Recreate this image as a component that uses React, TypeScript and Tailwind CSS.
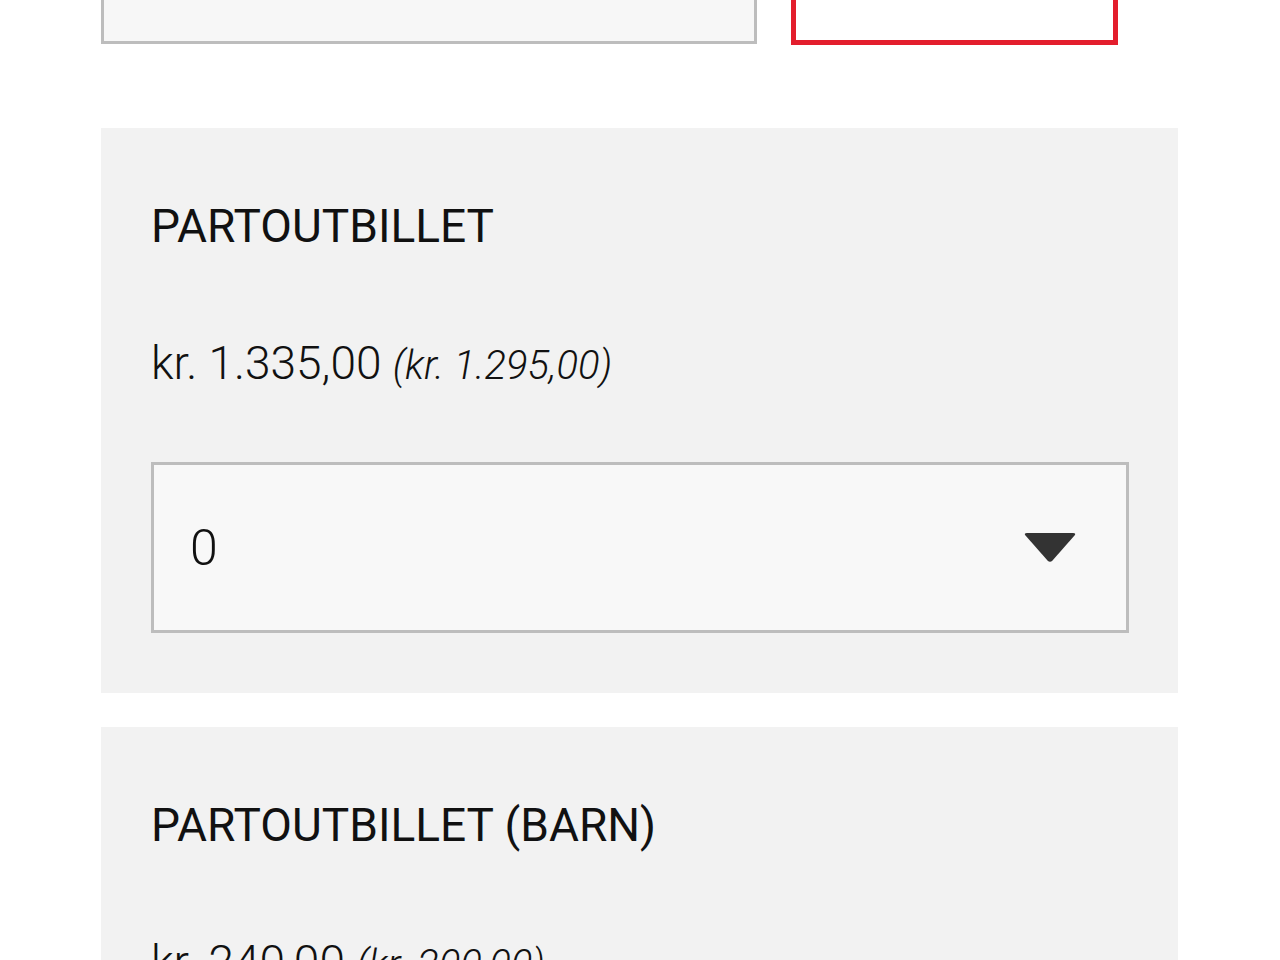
import React from "react";

type Ticket = {
  name: string;
  price: string;
  listPrice: string;
};

const tickets: Ticket[] = [
  { name: "PARTOUTBILLET", price: "kr. 1.335,00", listPrice: "(kr. 1.295,00)" },
  { name: "PARTOUTBILLET (BARN)", price: "kr. 240,00", listPrice: "(kr. 200,00)" },
];

function Caret() {
  return (
    <svg width="54" height="31" viewBox="0 0 54 31" className="shrink-0">
      <path
        d="M4 1 H50 Q53.5 1 51.5 3.5 L29.5 28.5 Q27 31 24.5 28.5 L2.5 3.5 Q0.5 1 4 1 Z"
        fill="#333333"
      />
    </svg>
  );
}

function TicketCard({ ticket }: { ticket: Ticket }) {
  return (
    <section className="bg-[#f2f2f2] pt-[75px] pb-[60px] pl-[50px] pr-[49px]">
      <h2 className="text-[46px] leading-none font-normal text-[#111]">{ticket.name}</h2>

      <p className="mt-[91px] text-[46px] leading-none font-light text-[#111]">
        {ticket.price}{" "}
        <span className="text-[40px] italic">{ticket.listPrice}</span>
      </p>

      {/* Quantity select */}
      <div className="mt-[76px] h-[171px] flex items-center justify-between border-[3px] border-[#bdbdbd] bg-[#f8f8f8] pl-[36px] pr-[49px]">
        <span className="text-[50px] font-light text-[#111] leading-none">0</span>
        <Caret />
      </div>
    </section>
  );
}

export default function App() {
  return (
    <div className="min-h-screen bg-white font-['Roboto',sans-serif] overflow-hidden">
      <div className="w-[1077px] ml-[101px]">
        {/* Top row: input + red outlined button, cut off by viewport */}
        <div className="flex gap-[34px] -mt-[40px]">
          <div className="w-[656px] h-[84px] bg-[#f7f7f7] border-[3px] border-[#bdbdbd]" />
          <div className="w-[327px] h-[85px] bg-white border-[5px] border-[#e31e2d]" />
        </div>

        <div className="mt-[83px] flex flex-col gap-[34px]">
          {tickets.map((t) => (
            <TicketCard key={t.name} ticket={t} />
          ))}
        </div>
      </div>
    </div>
  );
}
